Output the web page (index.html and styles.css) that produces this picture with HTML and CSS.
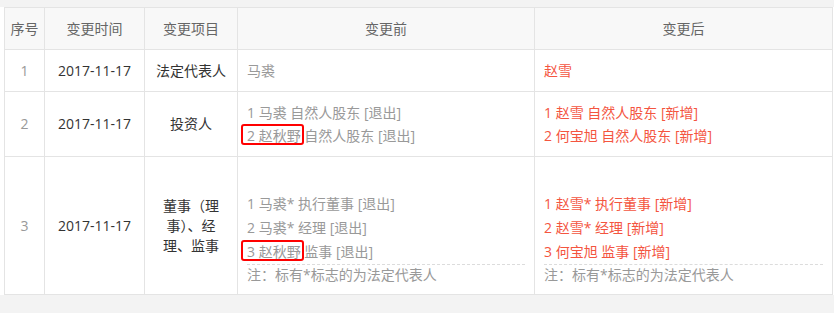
FILE: index.html
```html
<!DOCTYPE html>
<html lang="zh-CN">
<head>
<meta charset="utf-8">
<title>变更记录</title>
<link rel="stylesheet" href="styles.css">
</head>
<body>
<div class="panel">
  <table class="changes">
    <colgroup>
      <col class="c-no">
      <col class="c-date">
      <col class="c-item">
      <col class="c-before">
      <col class="c-after">
    </colgroup>
    <thead>
      <tr>
        <th>序号</th>
        <th>变更时间</th>
        <th>变更项目</th>
        <th>变更前</th>
        <th>变更后</th>
      </tr>
    </thead>
    <tbody>
      <tr class="r1">
        <td class="no">1</td>
        <td class="date">2017-11-17</td>
        <td class="item">法定代表人</td>
        <td class="before">马裘</td>
        <td class="after">赵雪</td>
      </tr>
      <tr class="r2">
        <td class="no">2</td>
        <td class="date">2017-11-17</td>
        <td class="item">投资人</td>
        <td class="before">
          <div class="line">1 马裘 自然人股东 [退出]</div>
          <div class="line"><span class="mark">2 赵秋野</span> 自然人股东 [退出]</div>
        </td>
        <td class="after">
          <div class="line">1 赵雪 自然人股东 [新增]</div>
          <div class="line">2 何宝旭 自然人股东 [新增]</div>
        </td>
      </tr>
      <tr class="r3">
        <td class="no">3</td>
        <td class="date">2017-11-17</td>
        <td class="item">董事（理事）、经理、监事</td>
        <td class="before">
          <div class="block">
            <div class="line2">1 马裘* 执行董事 [退出]</div>
            <div class="line2">2 马裘* 经理 [退出]</div>
            <div class="line2"><span class="mark">3 赵秋野</span> 监事 [退出]</div>
            <div class="note">注：标有*标志的为法定代表人</div>
          </div>
        </td>
        <td class="after">
          <div class="block">
            <div class="line2">1 赵雪* 执行董事 [新增]</div>
            <div class="line2">2 赵雪* 经理 [新增]</div>
            <div class="line2">3 何宝旭 监事 [新增]</div>
            <div class="note">注：标有*标志的为法定代表人</div>
          </div>
        </td>
      </tr>
    </tbody>
  </table>
</div>
</body>
</html>
```

FILE: styles.css
```css
html, body {
  margin: 0;
  padding: 0;
  background: #f3f3f3;
}
body {
  font-family: "Open Sans", "Noto Sans CJK SC", sans-serif;
  font-size: 14px;
  color: #333;
}
.panel {
  margin-top: 7px;
  background: #fff;
  padding: 0 2px 6px 4px;
  height: 288px;
  box-sizing: border-box;
}
.changes {
  border-collapse: collapse;
  table-layout: fixed;
  width: 828px;
}
.c-no { width: 40px; }
.c-date { width: 100px; }
.c-item { width: 93px; }
.c-before { width: 297px; }
.c-after { width: 298px; }
.changes th,
.changes td {
  border: 1px solid #e4e4e4;
  padding: 0 9px;
  line-height: 22px;
}
.changes th {
  background: #f8f8f8;
  font-weight: normal;
  color: #666;
  height: 41px;
  padding: 0;
  text-align: center;
}
.r1 td { height: 41px; }
.r2 td { height: 64px; }
.r3 td { height: 137px; }
.no {
  text-align: center;
  color: #999;
  padding: 0 !important;
}
.date {
  text-align: center;
  color: #333;
}
.item {
  text-align: center;
  color: #333;
  line-height: 20px !important;
}
.r3 .item { padding: 0 15px; }
.before { color: #999; }
.after { color: #f4553f; }
.line { line-height: 23px; }
.block { padding-top: 25px; }
.line2 { line-height: 24px; }
.note {
  border-top: 1px dashed #dcdcdc;
  color: #999;
  line-height: 20px;
}
.mark {
  position: relative;
}
.mark::after {
  content: "";
  position: absolute;
  left: -6px;
  right: -3px;
  top: -2px;
  bottom: 0;
  border: 2px solid #f00;
  border-radius: 3px;
}
```
